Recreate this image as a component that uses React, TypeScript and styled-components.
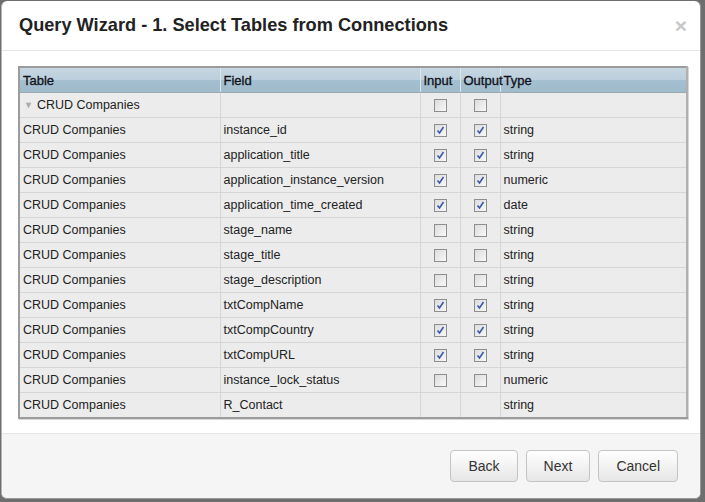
import React from 'react'
import styled, { createGlobalStyle } from 'styled-components'

type Row = {
  field: string
  input?: boolean
  output?: boolean
  type: string
  noBoxes?: boolean
}

const ROWS: Row[] = [
  { field: 'instance_id', input: true, output: true, type: 'string' },
  { field: 'application_title', input: true, output: true, type: 'string' },
  { field: 'application_instance_version', input: true, output: true, type: 'numeric' },
  { field: 'application_time_created', input: true, output: true, type: 'date' },
  { field: 'stage_name', type: 'string' },
  { field: 'stage_title', type: 'string' },
  { field: 'stage_description', type: 'string' },
  { field: 'txtCompName', input: true, output: true, type: 'string' },
  { field: 'txtCompCountry', input: true, output: true, type: 'string' },
  { field: 'txtCompURL', input: true, output: true, type: 'string' },
  { field: 'instance_lock_status', type: 'numeric' },
  { field: 'R_Contact', type: 'string', noBoxes: true },
]

const GlobalStyle = createGlobalStyle`
  html, body {
    margin: 0;
    padding: 0;
    background: #6e6e6e;
    font-family: "Liberation Sans", Arial, sans-serif;
  }
`

const Check = ({ checked }: { checked?: boolean }) => (
  <Box>
    {checked && (
      <svg width="9" height="9" viewBox="0 0 9 9">
        <path d="M1.5 4.5 L3.5 7 L7.5 1" fill="none" stroke="#3a58a8" strokeWidth="1.6" />
      </svg>
    )}
  </Box>
)

export default function App() {
  return (
    <>
      <GlobalStyle />
      <Modal>
        <Header>
          <Title>Query Wizard - 1. Select Tables from Connections</Title>
          <Close>×</Close>
        </Header>
        <Body>
          <Grid>
            <colgroup>
              <col style={{ width: 201 }} />
              <col style={{ width: 200 }} />
              <col style={{ width: 40 }} />
              <col style={{ width: 40 }} />
              <col />
            </colgroup>
            <thead>
              <tr>
                <Th>Table</Th>
                <Th>Field</Th>
                <Th>Input</Th>
                <Th>Output</Th>
                <Th>Type</Th>
              </tr>
            </thead>
            <tbody>
              <tr>
                <Td>
                  <Arrow>▼</Arrow>CRUD Companies
                </Td>
                <Td />
                <Td $center>
                  <Check />
                </Td>
                <Td $center>
                  <Check />
                </Td>
                <Td />
              </tr>
              {ROWS.map(r => (
                <tr key={r.field}>
                  <Td>CRUD Companies</Td>
                  <Td>{r.field}</Td>
                  <Td $center>{!r.noBoxes && <Check checked={r.input} />}</Td>
                  <Td $center>{!r.noBoxes && <Check checked={r.output} />}</Td>
                  <Td>{r.type}</Td>
                </tr>
              ))}
            </tbody>
          </Grid>
        </Body>
        <Footer>
          <Button>Back</Button>
          <Button>Next</Button>
          <Button>Cancel</Button>
        </Footer>
      </Modal>
    </>
  )
}

const Modal = styled.div`
  width: 700px;
  height: 498px;
  margin: 1px 0 0 1px;
  background: #fff;
  border: 1px solid #999;
  border-top: none;
  border-left-color: #b5b5b5;
  border-radius: 6px;
  display: flex;
  flex-direction: column;
  overflow: hidden;
  box-sizing: border-box;
`

const Header = styled.div`
  height: 49px;
  border-bottom: 1px solid #e5e5e5;
  display: flex;
  align-items: center;
  justify-content: space-between;
  padding: 0 13px 0 17px;
  flex-shrink: 0;
`

const Title = styled.h3`
  margin: 0;
  font-size: 18.2px;
  font-weight: bold;
  color: #222;
`

const Close = styled.span`
  font-size: 21px;
  font-weight: bold;
  color: #c8c8c8;
  line-height: 1;
`

const Body = styled.div`
  flex: 1;
  padding: 15px 13px 0 16px;
`

const Grid = styled.table`
  width: 670px;
  border-collapse: collapse;
  table-layout: fixed;
  border: 2px solid #9c9c9c;
  border-right-color: #b0b0b0;
  box-shadow: 1px 1px 0 #d8d8d8;
  background: #ececec;
  font-size: 12.5px;
  color: #222;
`

const Th = styled.th`
  height: 24px;
  padding: 0 3px;
  text-align: left;
  font-size: 13px;
  font-weight: normal;
  color: #10101a;
  -webkit-text-stroke: 0.3px #10101a;
  white-space: nowrap;
  overflow: visible;
  background: linear-gradient(#c6d6e1 0%, #bccfdc 48%, #a4bfcf 52%, #9fbbcc 100%);
  border-right: 1px solid #dbe5ec;
  border-bottom: 1px solid #9aa9b2;
  &:last-child {
    border-right: none;
  }
`

const Td = styled.td<{ $center?: boolean }>`
  height: 24px;
  padding: 0 3px;
  border-right: 1px solid #d6d6d6;
  border-bottom: 1px solid #d6d6d6;
  text-align: ${p => (p.$center ? 'center' : 'left')};
  white-space: nowrap;
  overflow: hidden;
  &:last-child {
    border-right: none;
  }
`

const Arrow = styled.span`
  font-size: 9px;
  color: #a8a8a8;
  margin: 0 4px 0 1px;
  vertical-align: 1px;
`

const Box = styled.span`
  display: inline-flex;
  align-items: center;
  justify-content: center;
  width: 11px;
  height: 11px;
  border: 1px solid #8e8e8e;
  background: linear-gradient(135deg, #dcdcdc, #f8f8f8);
  vertical-align: middle;
`

const Footer = styled.div`
  height: 65px;
  flex-shrink: 0;
  border-top: 1px solid #e5e5e5;
  background: #f5f5f5;
  display: flex;
  justify-content: flex-end;
  align-items: flex-start;
  gap: 8px;
  padding: 16px 22px 0 0;
  box-sizing: border-box;
`

const Button = styled.button`
  height: 32px;
  padding: 0 17px;
  font-family: "Liberation Sans", Arial, sans-serif;
  font-size: 14px;
  color: #333;
  border: 1px solid #c4c4c4;
  border-radius: 4px;
  background: linear-gradient(#ffffff, #e6e6e6);
`
